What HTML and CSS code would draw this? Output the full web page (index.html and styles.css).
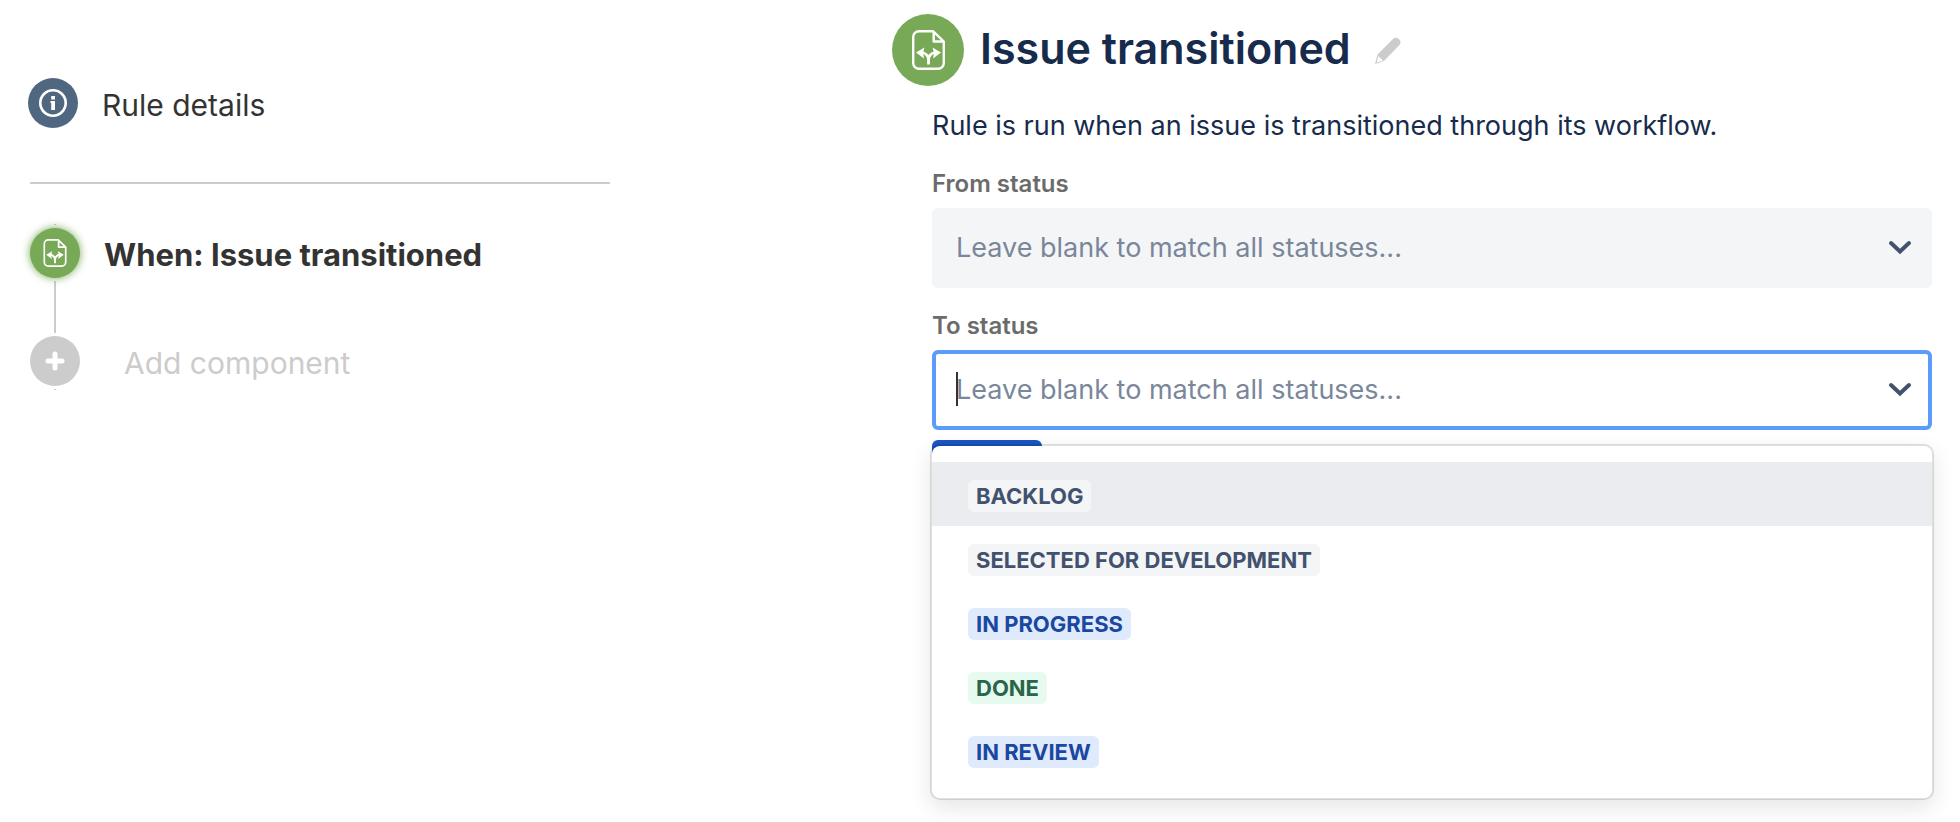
FILE: index.html
```html
<!DOCTYPE html>
<html lang="en">
<head>
    <meta charset="UTF-8">
    <meta name="viewport" content="width=device-width, initial-scale=1.0">
    <title>Issue transitioned</title>
    <link rel="stylesheet" href="styles.css">
</head>
<body>
    <svg class="symbols" aria-hidden="true">
        <symbol id="icon-transition" viewBox="0 0 33 40">
            <path d="M21 1.200H7a5.800 5.800 0 0 0-5.800 5.800v26a5.800 5.800 0 0 0 5.800 5.800h19a5.800 5.800 0 0 0 5.800-5.800V11.500z M21.700 2v9.500h10" fill="none" stroke="currentColor" stroke-width="2.400" stroke-linejoin="round"/>
            <path d="M16.500 34.500V30c0-4-2-6.500-6.500-7.500M16.500 30c0-4 2-6.500 6.500-7.500" fill="none" stroke="currentColor" stroke-width="2.800"/>
            <path d="M4 22.500l8.500-5-1.500 5.500 1 5.500zM29 22.500l-8.500-5 1.500 5.500-1 5.500z" fill="currentColor"/>
        </symbol>
        <symbol id="icon-chevron" viewBox="0 0 24 16">
            <path d="M3 3l9 8.500L21 3" fill="none" stroke="currentColor" stroke-width="4" stroke-linecap="round"/>
        </symbol>
    </svg>

    <div class="rule-page">
        <nav class="sidebar" aria-label="Rule">
            <a href="#details" class="rule-details">
                <span class="circle circle-info">
                    <svg width="28" height="28" viewBox="0 0 28 28">
                        <circle cx="14" cy="14" r="12.700" fill="none" stroke="currentColor" stroke-width="2.600"/>
                        <path d="M12.200 7h3.800v3.500h-3.800zM11.500 12H16v9h-3.800v-7h-.7z" fill="currentColor"/>
                    </svg>
                </span>
                <span class="step-text">Rule details</span>
            </a>
            <ol class="steps">
                <li class="tick"></li>
                <li>
                    <a href="#trigger" class="step step-active">
                        <span class="circle circle-trigger">
                            <svg width="24" height="28"><use href="#icon-transition"/></svg>
                        </span>
                        <span class="step-text">When: Issue transitioned</span>
                    </a>
                </li>
                <li class="connector"></li>
                <li>
                    <button type="button" class="step step-add">
                        <span class="circle circle-add">
                            <svg width="20" height="20" viewBox="0 0 20 20">
                                <path d="M10 3v14M3 10h14" stroke="currentColor" stroke-width="5" stroke-linecap="round"/>
                            </svg>
                        </span>
                        <span class="step-text">Add component</span>
                    </button>
                </li>
                <li class="tick"></li>
            </ol>
        </nav>

        <main class="panel">
            <header class="panel-header">
                <span class="circle circle-large">
                    <svg width="33" height="40"><use href="#icon-transition"/></svg>
                </span>
                <h1>Issue transitioned</h1>
                <button type="button" class="edit-btn" aria-label="Edit">
                    <svg width="26" height="27" viewBox="0 0 26 27">
                        <path d="M0 27l2.500-9.500L18.500 1.500a4.500 4.500 0 0 1 6.200 6.200L9 24z" fill="currentColor"/>
                        <path d="M3.300 19l4.700 4.500-6.300 2z" fill="#fff"/>
                    </svg>
                </button>
            </header>

            <form class="panel-form">
                <p class="description">Rule is run when an issue is transitioned through its workflow.</p>

                <label for="from-status">From status</label>
                <div class="select">
                    <input type="text" id="from-status" placeholder="Leave blank to match all statuses..." autocomplete="off">
                    <svg class="chevron" width="24" height="16"><use href="#icon-chevron"/></svg>
                </div>

                <label for="to-status">To status</label>
                <div class="select select-open">
                    <span class="caret"></span>
                    <input type="text" id="to-status" placeholder="Leave blank to match all statuses..." autocomplete="off">
                    <svg class="chevron" width="24" height="16"><use href="#icon-chevron"/></svg>
                </div>

                <div class="form-actions">
                    <button type="submit" class="save-btn" aria-label="Save"></button>
                    <ul class="menu" role="listbox">
                        <li class="option option-focused" role="option"><span class="lozenge">BACKLOG</span></li>
                        <li class="option" role="option"><span class="lozenge">SELECTED FOR DEVELOPMENT</span></li>
                        <li class="option" role="option"><span class="lozenge lozenge-progress">IN PROGRESS</span></li>
                        <li class="option" role="option"><span class="lozenge lozenge-done">DONE</span></li>
                        <li class="option" role="option"><span class="lozenge lozenge-progress">IN REVIEW</span></li>
                    </ul>
                </div>
            </form>
        </main>
    </div>
</body>
</html>
```

FILE: styles.css
```css
:root {
    --text: #172b4d;
    --text-dark: #333;
    --text-label: #6b6b6b;
    --placeholder: #7a869a;
    --slate: #42526e;
    --grey: #ccc;
    --green: #78a957;
    --focus: #5c9bfa;
    --primary: #1a55c4;
}

* {
    margin: 0;
    padding: 0;
    box-sizing: border-box;
}

body {
    min-height: 100vh;
    font-family: Inter, "Liberation Sans", sans-serif;
    background: #fff;
    color: var(--text);
}

a {
    color: inherit;
    text-decoration: none;
}

button,
input {
    font: inherit;
    border: none;
    background: none;
}

ol,
ul {
    list-style: none;
}

svg {
    display: block;
}

.symbols {
    display: none;
}

.rule-page {
    display: grid;
    grid-template-columns: minmax(0, 582fr) minmax(0, 1042fr);
    column-gap: 282px;
    padding: 14px 26px 20px 28px;
}

.circle {
    display: flex;
    align-items: center;
    justify-content: center;
    flex: none;
    width: 50px;
    height: 50px;
    border-radius: 50%;
    color: #fff;
}

/* Sidebar */
.sidebar {
    padding-top: 64px;
    font-size: 30px;
    line-height: 40px;
    color: var(--text-dark);
}

.rule-details {
    display: flex;
    align-items: center;
    gap: 24px;
}

.circle-info {
    background: #4f6780;
}

.steps {
    margin: 54px 0 0 2px;
    padding-top: 37px;
    border-top: 2px solid var(--grey);
}

.step {
    display: flex;
    align-items: center;
    gap: 24px;
}

.step-text {
    padding-top: 3px;
}

.step-active {
    font-size: 31px;
    font-weight: 700;
}

.circle-trigger {
    background: var(--green);
    box-shadow: 0 0 8px var(--green);
}

.step-add {
    gap: 44px;
    color: var(--grey);
    cursor: pointer;
}

.circle-add {
    background: var(--grey);
}

.tick,
.connector {
    width: 2px;
    margin: 3px 0 3px 24px;
    background: var(--grey);
}

.tick {
    height: 1px;
}

.connector {
    height: 52px;
}

/* Trigger panel */
.panel-header {
    display: flex;
    align-items: center;
    gap: 16px;
}

.circle-large {
    width: 72px;
    height: 72px;
    background: var(--green);
}

h1 {
    padding-bottom: 4px;
    font-size: 43px;
    font-weight: 600;
    line-height: 56px;
}

.edit-btn {
    margin-left: 8px;
    color: var(--grey);
    cursor: pointer;
}

.panel-form {
    padding: 20px 2px 0 40px;
}

.description {
    font-size: 27px;
    line-height: 40px;
}

label {
    display: block;
    margin: 22px 0 8px;
    font-size: 24px;
    font-weight: 600;
    line-height: 32px;
    color: var(--text-label);
}

.select {
    position: relative;
    display: flex;
    align-items: center;
    height: 80px;
    padding: 0 16px 0 20px;
    border: 4px solid #f4f5f7;
    border-radius: 6px;
    background: #f4f5f7;
}

.select input {
    flex: 1;
    min-width: 0;
    outline: none;
    font-size: 27px;
    line-height: 40px;
    color: var(--text);
}

.select input::placeholder {
    color: var(--placeholder);
    opacity: 1;
}

.select-open {
    border-color: var(--focus);
    background: #fff;
}

.caret {
    position: absolute;
    left: 20px;
    top: 18px;
    width: 2px;
    height: 34px;
    background: var(--text-dark);
}

.chevron {
    color: var(--slate);
}

.form-actions {
    position: relative;
    padding-top: 10px;
}

.save-btn {
    display: block;
    width: 110px;
    height: 64px;
    border-radius: 6px;
    background: var(--primary);
}

/* Status menu */
.menu {
    position: absolute;
    top: 14px;
    left: -2px;
    right: -2px;
    padding: 16px 0;
    border: 2px solid rgba(0, 0, 0, 0.12);
    border-radius: 10px;
    background: #fff;
    background-clip: padding-box;
    box-shadow: 0 8px 22px rgba(0, 0, 0, 0.1);
}

.option {
    display: flex;
    align-items: center;
    height: 64px;
    padding: 4px 36px 0;
    cursor: pointer;
}

.option-focused {
    background: #ebecf0;
}

.lozenge {
    padding: 0 8px;
    border-radius: 6px;
    background: #f4f5f7;
    color: var(--slate);
    font-size: 22px;
    font-weight: 700;
    line-height: 32px;
}

.lozenge-progress {
    background: #e0eafd;
    color: #1a479f;
}

.lozenge-done {
    background: #e6faf0;
    color: #28654a;
}
```
